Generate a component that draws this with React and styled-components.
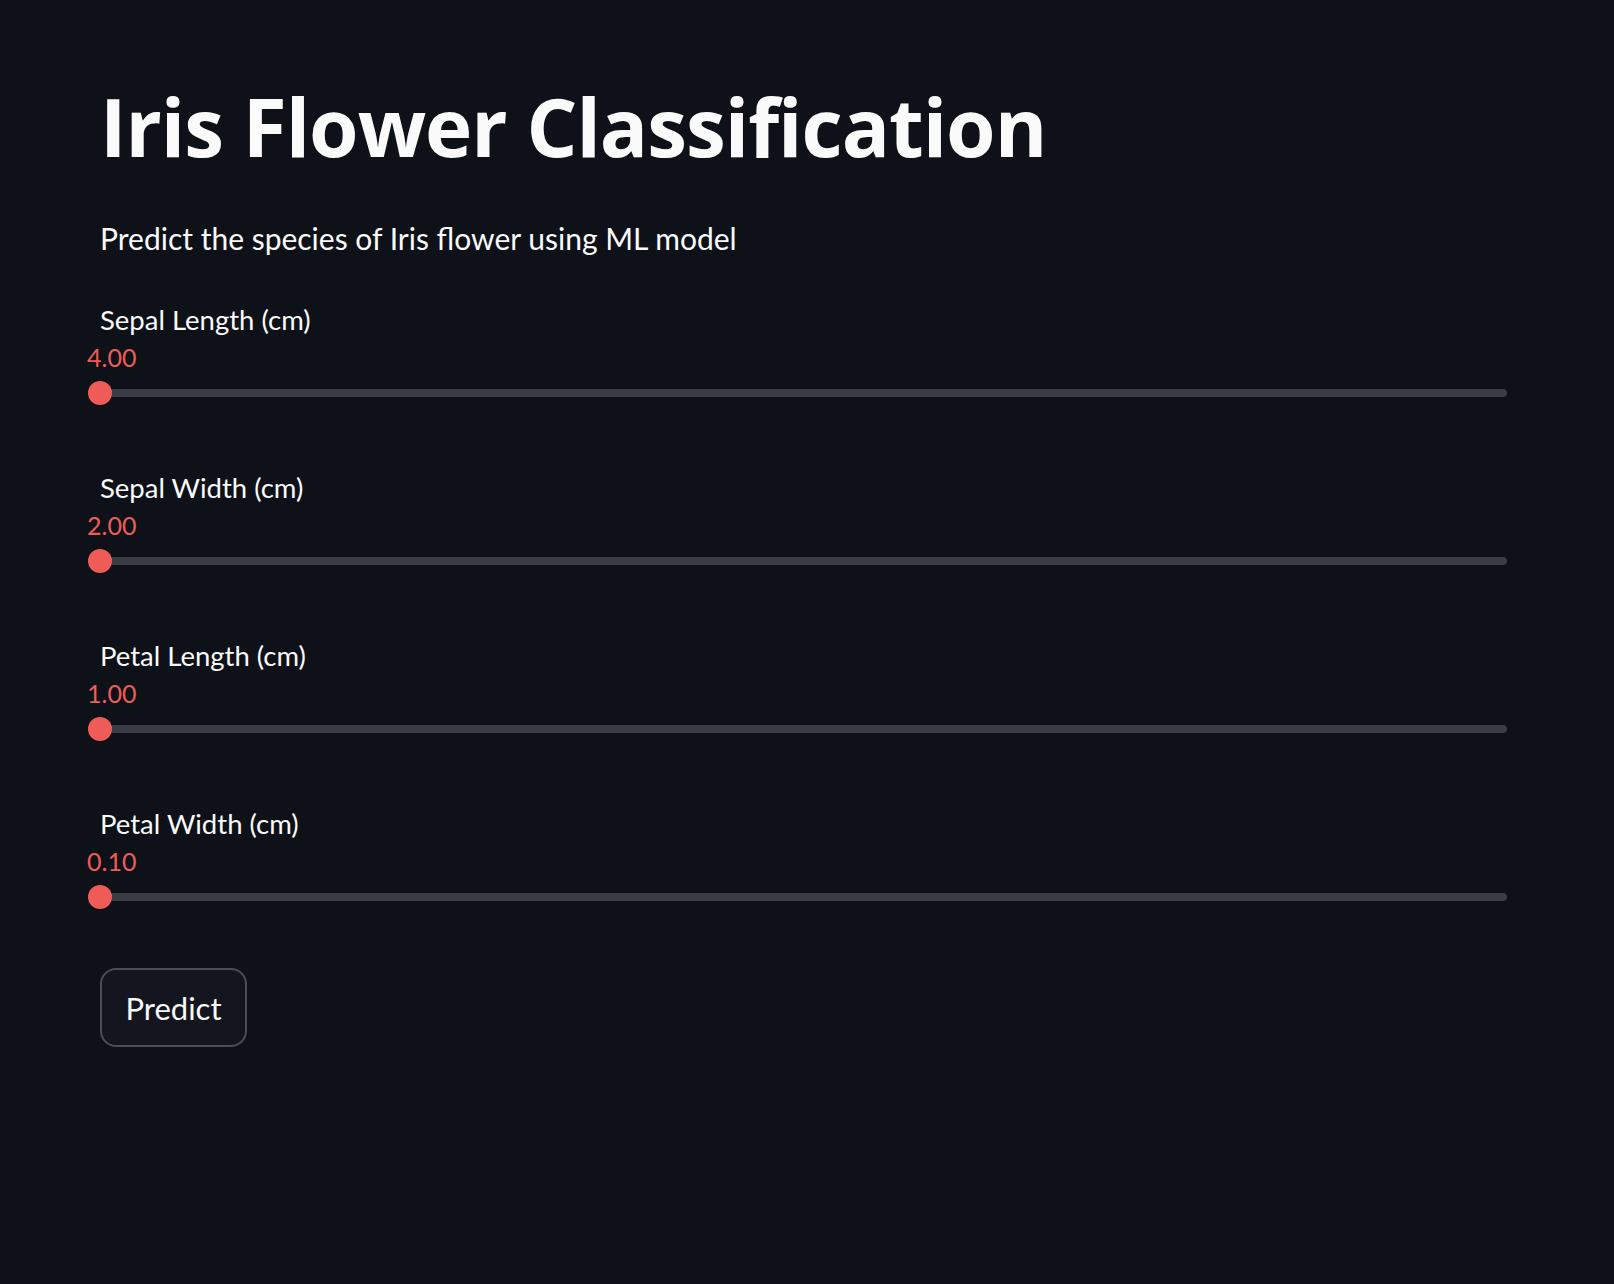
import React from 'react'
import styled, { createGlobalStyle } from 'styled-components'

const GlobalStyle = createGlobalStyle`
    html, body {
        margin: 0;
        padding: 0;
        background: #0e1117;
    }
    body {
        font-family: 'Lato', 'Noto Sans', sans-serif;
        color: #fafafa;
    }
`;

const Main = styled.main`
    min-height: 1284px;
    box-sizing: border-box;
    padding: 76px 107px 0 100px;
    display: flex;
    flex-direction: column;
`;

const Title = styled.h1`
    margin: 0;
    font-family: 'Open Sans', 'Lato', sans-serif;
    font-size: 80px;
    font-weight: 700;
    line-height: 100px;
    letter-spacing: -1px;
`;

const Subtitle = styled.p`
    margin: 40px 0 0;
    font-size: 30px;
    line-height: 44px;
`;

const SliderBlock = styled.div`
    display: flex;
    flex-direction: column;
    margin-top: ${p => p.first ? '41px' : '32px'};
`;

const Label = styled.label`
    font-size: 27.5px;
    line-height: 38px;
`;

const Value = styled.span`
    color: #ef5c57;
    font-size: 25px;
    line-height: 36px;
    margin-left: -13px;
`;

const Track = styled.div`
    position: relative;
    height: 8px;
    margin: 14px 0 40px;
    border-radius: 4px;
    background: #3a3c45;
`;

const Thumb = styled.div`
    position: absolute;
    top: 50%;
    width: 24px;
    height: 24px;
    border-radius: 50%;
    background: #ef5c57;
    transform: translate(-50%, -50%);
`;

const Button = styled.button`
    align-self: flex-start;
    margin-top: 27px;
    width: 147px;
    height: 79px;
    box-sizing: border-box;
    border: 2px solid #4b4d57;
    border-radius: 16px;
    background: #13151f;
    color: #fafafa;
    font-family: inherit;
    font-size: 31px;
    cursor: pointer;
`;

const sliders = [
    { label: 'Sepal Length (cm)', value: '4.00', pct: 0 },
    { label: 'Sepal Width (cm)', value: '2.00', pct: 0 },
    { label: 'Petal Length (cm)', value: '1.00', pct: 0 },
    { label: 'Petal Width (cm)', value: '0.10', pct: 0 },
];

function Slider({ label, value, pct, first }) {
    return (
        <SliderBlock first={first}>
            <Label>{label}</Label>
            <Value>{value}</Value>
            <Track>
                <Thumb style={{ left: `${pct}%` }} />
            </Track>
        </SliderBlock>
    )
}

export default function App() {
    return (
        <>
            <GlobalStyle />
            <Main>
                <Title>Iris Flower Classification</Title>
                <Subtitle>Predict the species of Iris flower using ML model</Subtitle>
                {sliders.map((s, i) => (
                    <Slider key={s.label} {...s} first={i === 0} />
                ))}
                <Button>Predict</Button>
            </Main>
        </>
    )
}
